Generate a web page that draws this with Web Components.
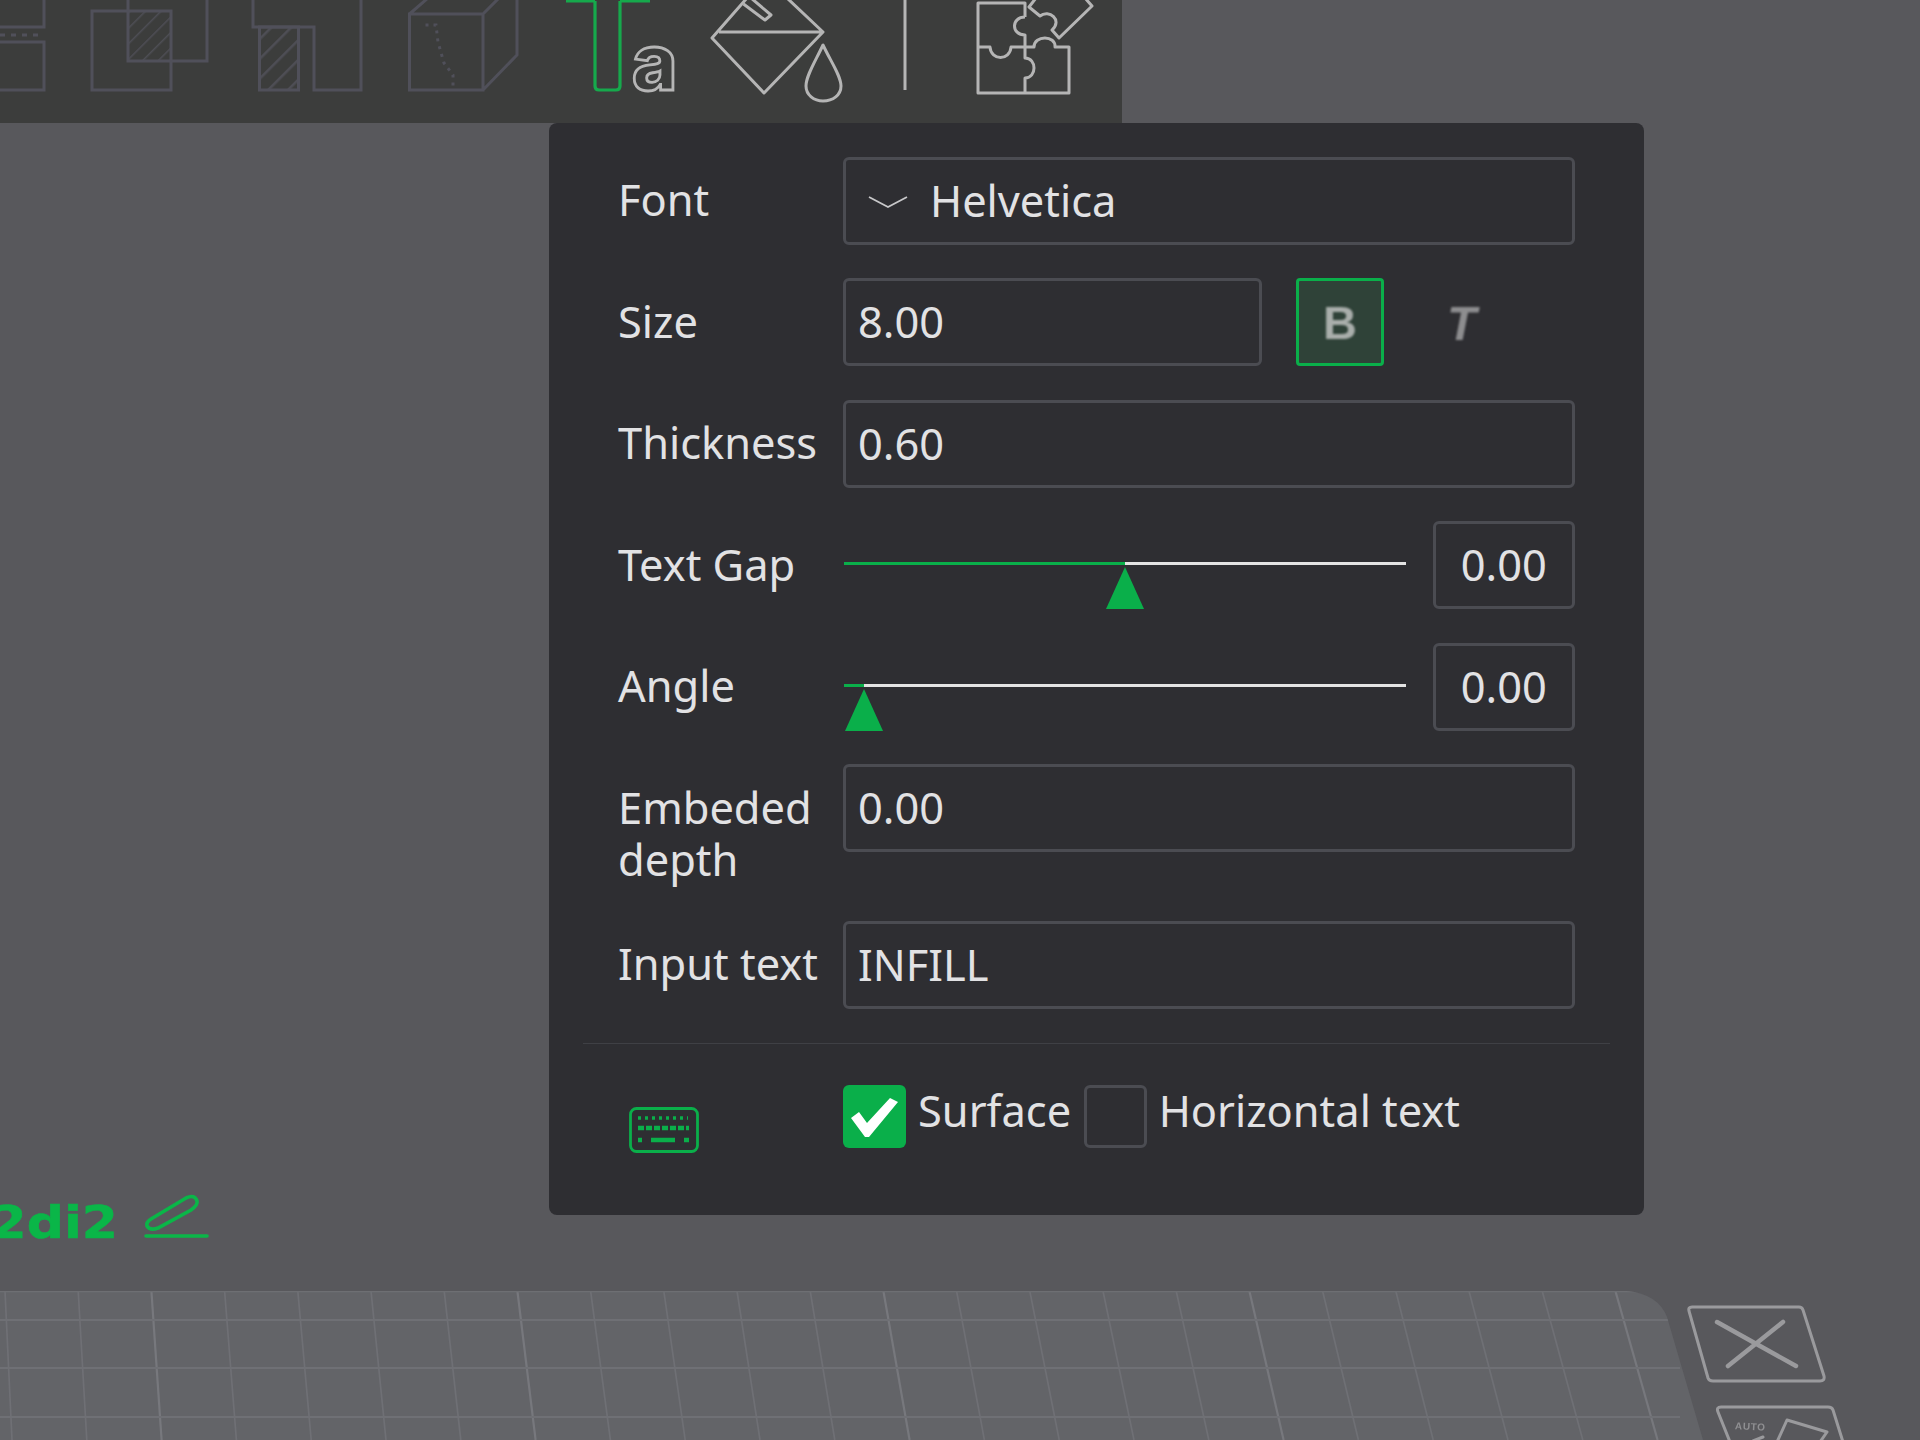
<!doctype html>
<html><head><meta charset="utf-8">
<style>
html,body{margin:0;padding:0;background:#58585c;}
body{width:1920px;height:1440px;overflow:hidden;font-family:"Noto Sans",Roboto,sans-serif;color:#e2e2e4;}
</style></head>
<body>
<x-app>
  <x-scene slot="scene"></x-scene>
  <x-toolbar slot="top"></x-toolbar>
  <x-panel slot="panel">
    <x-row label="Font"><x-select value="Helvetica"></x-select></x-row>
    <x-row label="Size"><x-style-controls value="8.00"></x-style-controls></x-row>
    <x-row label="Thickness"><x-field value="0.60"></x-field></x-row>
    <x-row label="Text Gap"><x-slider pos="281" value="0.00"></x-slider></x-row>
    <x-row label="Angle"><x-slider pos="20" value="0.00"></x-slider></x-row>
    <x-row label="Embeded depth"><x-field value="0.00"></x-field></x-row>
    <x-row label="Input text"><x-field value="INFILL"></x-field></x-row>
    <x-panel-foot></x-panel-foot>
  </x-panel>
</x-app>
<script>
function def(name, html){
  customElements.define(name, class extends HTMLElement{
    constructor(){super();this.attachShadow({mode:'open'});}
    connectedCallback(){
      this.shadowRoot.innerHTML = typeof html==='function'?html(this):html;
    }
  });
}
def('x-app',`<style>
:host{display:block;position:relative;width:1920px;height:1440px;overflow:hidden;filter:blur(.6px)}
.scene{position:absolute;inset:0}
.col{position:relative;display:flex;flex-direction:column;align-items:flex-start}
.pw{margin-left:549px}
</style>
<div class="scene"><slot name="scene"></slot></div>
<div class="col"><slot name="top"></slot><div class="pw"><slot name="panel"></slot></div></div>`);

let grid='';
for(let n=0;n<=24;n++){
  const x=5+73.2*n, b=x+7+n*1.6, major=(n%5===2);
  grid+=`<line x1="${x}" y1="1291" x2="${b}" y2="1440" stroke="${major?'#77787d':'#6f7075'}" stroke-width="${major?2.2:1.7}"/>`;
}
def('x-scene',`<style>
:host{display:block;width:1920px;height:1440px;position:relative}
svg{position:absolute;left:0;top:0}
.name{position:absolute;right:1802px;top:1193px;font:700 44px/60px "DejaVu Sans",sans-serif;color:#0ab648;-webkit-text-stroke:.6px #0ab648;transform:scaleX(1.18);transform-origin:100% 50%;white-space:nowrap}
.auto{position:absolute;left:1735px;top:1421px;font:700 10px/12px "Liberation Sans",sans-serif;letter-spacing:.6px;color:#8f8f92;transform:rotate(3deg)}
</style>
<svg width="1920" height="1440" fill="none">
<defs><clipPath id="bed"><path d="M-5 1291H1627Q1658 1294 1667 1317L1703 1440H-5Z"/></clipPath></defs>
<path d="M-5 1291H1627Q1658 1294 1667 1317L1703 1440H-5Z" fill="#636468"/>
<g clip-path="url(#bed)">
${grid}
<path d="M0 1320H1680M0 1368H1680M0 1417H1680" stroke="#6f7075" stroke-width="2.2"/>
<path d="M0 1291.5H1640" stroke="#6e6f73" stroke-width="1.5"/>
</g>
<g stroke="#9a9a9d" stroke-width="3" stroke-linecap="round" stroke-linejoin="round">
<path d="M1692 1307H1799Q1802 1307 1803 1310L1824 1376Q1825 1381 1820 1381H1713Q1709 1381 1708 1378L1689 1311Q1688 1307 1692 1307Z"/>
<path d="M1717 1322L1796 1366M1783 1322L1728 1366" stroke-width="4.5"/>
<path d="M1730 1442L1718 1412Q1716 1407 1721 1407H1828Q1832 1407 1833 1410L1843 1442"/>
<path d="M1777 1442L1787 1420L1827 1432L1820 1442M1753 1441L1763 1437" stroke-width="3"/>
</g>
<g fill="none" stroke="#0ab648" stroke-linecap="round">
<path d="M151 1219L186 1198Q195 1194 197 1201Q198 1205 191 1210L158 1228Q150 1231 147 1226Q146 1222 151 1219Z" stroke-width="3.6"/>
<path d="M146 1236H207" stroke-width="3.6"/>
</g>
</svg>
<div class="name">2di2</div>
<div class="auto">AUTO</div>`);

def('x-toolbar',`<style>
:host{display:block;width:1122px;height:122.5px;background:#3c3d3c;overflow:hidden}
svg{display:block}
text{font:800 77px Inter,sans-serif;fill:#3c3d3c;stroke:#b5b5b5;stroke-width:2.8}
</style>
<svg width="1122" height="123" fill="none">
<defs><pattern id="h" width="14" height="14" patternUnits="userSpaceOnUse" patternTransform="rotate(45)"><line x1="0" y1="0" x2="0" y2="14" stroke="#4e4e55" stroke-width="5"/></pattern>
<pattern id="h2" width="11" height="11" patternUnits="userSpaceOnUse" patternTransform="rotate(45)"><line x1="0" y1="0" x2="0" y2="11" stroke="#4e4e55" stroke-width="3"/></pattern></defs>
<g stroke="#50505a" stroke-width="3">
<path d="M44 -2V27H0M0 42H44V90H0"/>
<path d="M0 35H42" stroke-dasharray="5 6"/>
<rect x="128" y="11" width="43" height="50" fill="url(#h2)" stroke="none"/>
<path d="M92 11H171V90H92ZM128 -2V61H207V-2"/>
<rect x="259.500" y="27" width="39" height="63" fill="url(#h)"/>
<path d="M253 -2V27H314V90H361V-2"/>
<path d="M409.500 14H483V90H409.500ZM409.500 14L428 -2M483 14L499 -2M517 -2V55L483 90"/>
<path d="M425.500 25H436L438 42L444 63L453 75V90" stroke-dasharray="3 5" stroke-width="3"/>
</g>
<path d="M566 1H595M620 1H650M595 1V86Q595 90 599 90H616Q620 90 620 86V1" stroke="#16a94c" stroke-width="3.200"/>
<text x="632" y="90">a</text>
<g stroke="#b5b5b5" stroke-width="3" stroke-linejoin="round">
<path d="M747 -2L712 38L764 93L823 32L787 -2M719 32H823"/>
<path d="M751 -2L771 15L765 20L743.500 4"/>
<path d="M823 45C815 62 806 76 806 86C806 95 814 101 823 101C833 101 841 95 841 86C841 76 831 62 823 45Z"/>
<path d="M905 -2V90"/>
<path d="M1025 17V3H978V93H1069V47H1055C1056 35 1034 35 1034 47H1025V58C1037 58 1037 78 1025 78V93M1025 47H1011C1010 61 991 61 990 47H978M1025 17C1011 17 1011 35 1025 35V47"/>
<path d="M1036 -2L1029 7L1040 16C1049 9 1063 20 1052 30L1059 38L1092 6L1085 -2"/>
</g>
</svg>`);

def('x-panel',`<style>
:host{display:block;box-sizing:border-box;width:1094.500px;padding:34px 69px 0;height:1092.500px;background:#2e2e32;border-radius:8px}
.stack{display:flex;flex-direction:column;gap:33.500px}
</style><div class="stack"><slot></slot></div>`);

def('x-row',el=>`<style>
:host{display:grid;grid-template-columns:225px 731.500px;align-items:start}
.l{font-size:43.400px;line-height:52px;padding:17.500px 0 1.500px;width:215px}
</style><div class="l">${el.getAttribute('label')}</div><div><slot></slot></div>`);

const box=`box-sizing:border-box;height:88px;border:3px solid #4b4c52;border-radius:6px;font-size:43.400px;line-height:81px;`;
def('x-field',el=>`<style>
:host{display:block;${box}padding-left:12px}
</style>${el.getAttribute('value')}`);

def('x-select',el=>`<style>
:host{display:flex;align-items:center;${box}padding-left:22px;gap:22px}
svg{display:block;margin-top:2px}
</style><svg width="40" height="14" fill="none"><path d="M1 2L20 12L39 2" stroke="#c8c8ca" stroke-width="1.800"/></svg><span>${el.getAttribute('value')}</span>`);

def('x-style-controls',el=>`<style>
:host{display:flex;align-items:center;gap:34px}
.i{flex:0 0 419px;${box}padding-left:12px}
.b{box-sizing:border-box;width:88px;height:88px;border:3px solid #0aaf4a;border-radius:4px;background:#2f4238;display:flex;align-items:center;justify-content:center}
.g{font:700 47px "Liberation Sans",sans-serif;color:#a9aeab;filter:blur(1.200px)}
.t{font:italic 700 48px "Liberation Sans",sans-serif;color:#8d8d8f;filter:blur(1.200px);margin:2px 0 0 29px}
</style><div class="i">${el.getAttribute('value')}</div><div class="b"><span class="g">B</span></div><span class="t">T</span>`);

def('x-slider',el=>{const p=+el.getAttribute('pos');return `<style>
:host{display:flex;align-items:flex-start;gap:27px;height:88px}
.s{position:relative;width:562px;margin-left:1px;height:88px;flex:none}
.tr{position:absolute;left:0;right:0;top:41px;height:3px;background:#e4e4e4}
.f{position:absolute;left:0;top:41px;height:3px;background:#0aaf4a;width:${p}px}
svg{position:absolute;top:46px;left:${p-19}px}
.v{box-sizing:border-box;width:141.500px;${box}text-align:center}
</style><div class="s"><div class="tr"></div><div class="f"></div><svg width="38" height="42"><path d="M19 0L38 42H0Z" fill="#0aaf4a"/></svg></div><div class="v">${el.getAttribute('value')}</div>`});

def('x-check',el=>`<style>
:host{display:inline-flex;align-items:flex-start;gap:12px}
.c{box-sizing:border-box;width:63px;height:63px;border-radius:6px;display:flex;align-items:center;justify-content:center;flex:none}
.on{background:#0aaf4a}.off{border:3px solid #4b4c52}
.t{font-size:43.400px;line-height:52px}
svg{display:block}
</style><div class="c ${el.hasAttribute('checked')?'on':'off'}">${el.hasAttribute('checked')?'<svg width="63" height="63"><path d="M8 33L16 27L24 38L47 13L55 17L26 52L22 52Z" fill="#fff"/></svg>':''}</div><span class="t">${el.getAttribute('label')}</span>`);

def('x-panel-foot',`<style>
:host{display:block;margin:1px -35px 0;border-top:1.500px solid #3f4045;padding:40.500px 35px 0}
.r{display:grid;grid-template-columns:225px 1fr}
.k{padding:22px 0 0 11px}
.cs{display:flex;gap:12.500px;align-items:flex-start}
svg{display:block}
</style><div class="r"><div class="k">
<svg width="70" height="46" fill="none"><rect x="1.500" y="1.500" width="67" height="43" rx="6" stroke="#0aaf4a" stroke-width="2.800"/><g stroke="#0aaf4a"><path d="M9 11H59" stroke-dasharray="3 4" stroke-width="3.500"/><path d="M9 21H60" stroke-dasharray="6 2" stroke-width="4.500"/><path d="M9 33H13M22 33H46M55 33H60" stroke-width="4.500"/></g></svg>
</div><div class="cs"><x-check checked label="Surface"></x-check><x-check label="Horizontal text"></x-check></div></div>`);
</script>
</body></html>
